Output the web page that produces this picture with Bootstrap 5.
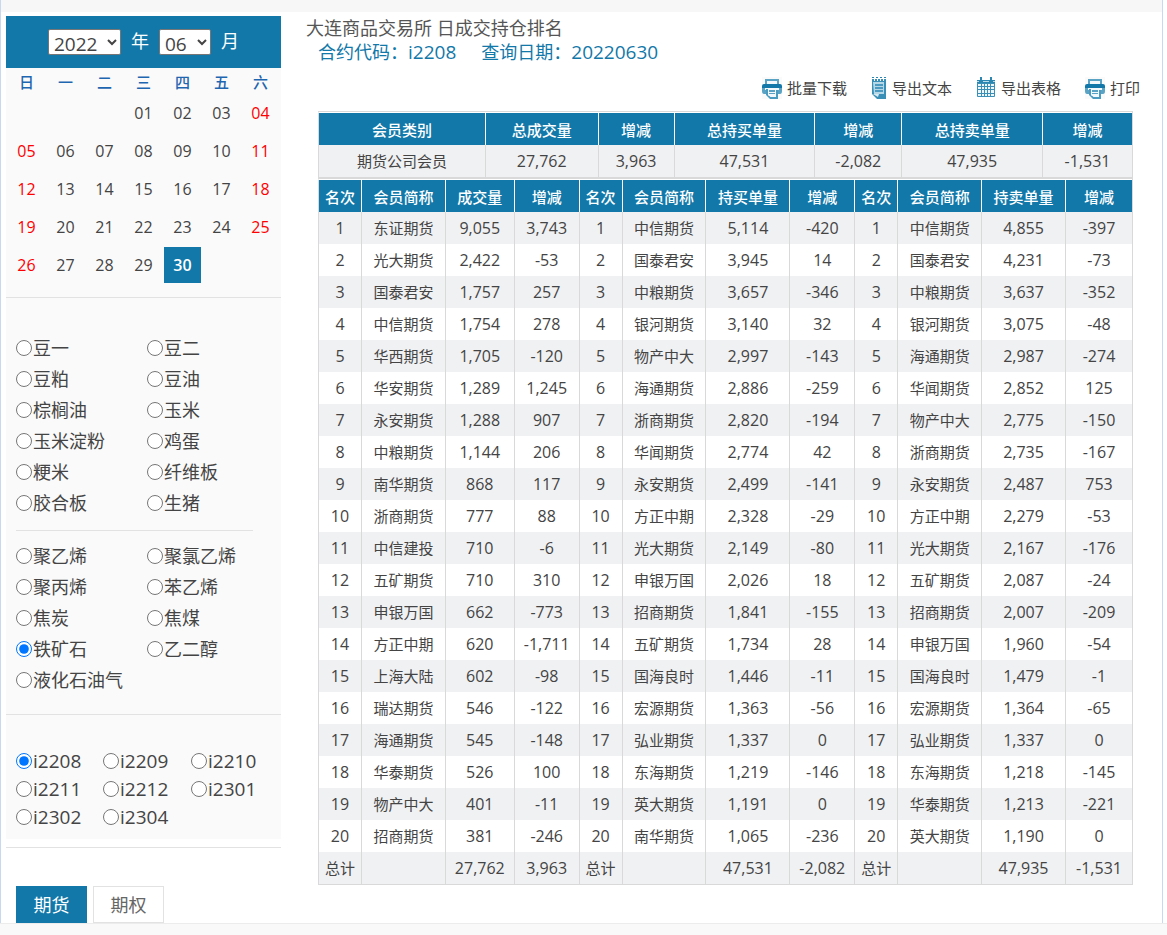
<!DOCTYPE html>
<html lang="zh-CN">
<head>
<meta charset="utf-8">
<meta name="viewport" content="width=device-width, initial-scale=1">
<title>日成交持仓排名</title>
<link href="https://cdn.jsdelivr.net/npm/bootstrap@5.3.0/dist/css/bootstrap.min.css" rel="stylesheet">
<style>
  :root { --brand: #1278a9; --rule: #e2e2e2; --grid: #d9d9d9; --ink: #444; }
  body { background: #fff; color: var(--ink); font-family: "Open Sans", "Noto Sans CJK SC", sans-serif; font-size: 18px; line-height: 24px; }
  a { color: inherit; text-decoration: none; }
  .page-frame { margin-right: 4px; border: solid #c8d8f0; border-width: 0 1px; }
  .top-strip { height: 12px; background: #f7f7f7; }
  .content { padding: 4px 22px 0 5px; }
  .foot { border-top: 1px solid #ececec; background: #f9f9f9; height: 12px; }
  .side { width: 275px; flex: none; }
  .panel { display: flow-root; background: #fafafa; border-bottom: 1px solid var(--rule); }
  .cal-head { background: var(--brand); color: #fff; height: 52px; gap: 10px; }
  .cal-head select { height: 26px; border: 1px solid #767676; border-radius: 2px; background-color: #fff; color: var(--ink); font-size: 19px; line-height: 20px; padding: 0 0 2px 1px; }
  .cal-head label { padding-bottom: 2px; }
  .sel-year { width: 73px; }
  .sel-month { width: 52px; }
  .calendar { width: 273px; table-layout: fixed; border-collapse: separate; border-spacing: 0; text-align: center; font-size: 16px; margin-bottom: 12px; }
  .calendar th { height: 27px; padding: 0 0 0 2px; color: #1f66b0; font-size: 15px; font-weight: 500; }
  .calendar td { height: 38px; padding: 0 0 2px 2px; }
  .calendar a { display: block; line-height: 36px; }
  .calendar td:first-child, .calendar td:last-child { color: #f00; }
  .calendar .chosen { background: var(--brand); color: #fff; font-weight: 600; }
  .choices { display: grid; padding: 0 10px; }
  .two-up { grid-template-columns: 131px 1fr; grid-auto-rows: 31px; }
  .three-up { grid-template-columns: 87px 88px 1fr; grid-auto-rows: 28px; font-size: 19px; }
  .choices label { display: flex; align-items: center; white-space: nowrap; }
  .choices input { width: 16px; height: 16px; margin: 0 1px 0 0; }
  .goods { padding: 34px 0 19px; }
  .thin-rule { margin: 12px 28px 9px 10px; border-top: 1px solid var(--rule); }
  .switch { gap: 6px; padding: 38px 0 0 10px; }
  .switch button { width: 71px; height: 37px; border: 1px solid var(--rule); background: #fff; color: #666; padding: 0; }
  .switch .on { background: var(--brand); border-color: var(--brand); color: #fff; }
  .report { padding-left: 25px; min-width: 0; }
  .title-line { color: #555; font-size: 18px; font-weight: 400; line-height: 24px; margin: 0; }
  .query { color: var(--brand); padding-left: 12px; gap: 25px; }
  .num { font-size: 19px; }
  .tools { gap: 24px; font-size: 15px; line-height: 24px; margin: 12px 0 11px; }
  .tools svg { width: 20px; height: 22px; margin-right: 5px; flex: none; }
  .tools .slim { width: 16px; }
  .sheet { margin: 0 7px 0 12px; }
  .ranks { width: 100%; table-layout: fixed; border-collapse: separate; border-spacing: 0; border: 1px solid var(--grid); border-left: 0; text-align: center; font-size: 15px; line-height: 24px; }
  .ranks th { height: 33px; padding: 1px 0 0; background: var(--brand); color: #fff; border: solid #fff; border-width: 1px 0 0 1px; font-weight: 500; }
  .ranks th:first-child { border-left-color: var(--grid); }
  .ranks td { height: 32px; padding: 0; border-left: 1px solid var(--grid); white-space: nowrap; }
  .ranks .fig { font-size: 16px; }
  .ranks tbody tr:nth-child(odd) td { background: #f0f1f3; }
</style>
</head>
<body>
<svg class="d-none" aria-hidden="true">
  <symbol id="ico-print" viewBox="0 0 20 22">
    <path fill="#fafafa" d="M0 0h20v22H0z"/>
    <path fill="#5ba3c4" d="M3 2h14v5H3z"/>
    <path fill="#f2f8fb" d="M5 4h10v3H5z"/>
    <path fill="#1278a9" d="M2 7h16q2 0 2 2v2H0V9q0-2 2-2z"/>
    <path fill="#5ba3c4" d="M0 11h20v3q0 3-2 3H2q-2 0-2-3z"/>
    <path fill="#f2f8fb" d="M3 11h14v2H3z"/>
    <path fill="#4b9abf" d="M4 12h2v6l3 2h5v-7h2v9H8l-4-4z"/>
    <path fill="#f2f8fb" d="M6 12h8v8H9l-3-2z"/>
    <path fill="#5ba3c4" d="M7 13h6v2H7zM7 16h6v1H7z"/>
  </symbol>
  <symbol id="ico-text" viewBox="0 0 16 22">
    <path fill="#3a8fb7" d="M1 2h14v20H6l-5-5z"/>
    <path fill="#b6d7e6" d="M2 5h11v12H3z"/>
    <path fill="#d8eaf2" d="M2 17h6l-1 3z"/>
    <path stroke="#2a87b2" stroke-width="1.500" d="M4 8h8M4 11h8M4 14h8"/>
    <path stroke="#fff" d="M3.500 2v2M6.500 2v2M9.500 2v2M12.500 2v2"/>
    <path stroke="#2a87b2" d="M1 .5h2M5 .5h2M9 .5h2M13 .5h2"/>
  </symbol>
  <symbol id="ico-grid" viewBox="0 0 20 22">
    <path fill="#2a87b2" d="M1 3h18v4H1zM4 0h2v4H4zM14 0h2v4h-2z"/>
    <path fill="#bcdbe8" d="M1 4h2v1H1zm6 0h6v1H7zm10 0h2v1h-2z"/>
    <path fill="#eef6fa" stroke="#3a8fb7" d="M1.500 6.500h17v13h-17z"/>
    <path stroke="#3a8fb7" d="M2 9.500h16M2 12.500h16M2 16.500h16M5.500 7v12M8.500 7v12M11.500 7v12M14.500 7v12"/>
  </symbol>
</svg>

<div class="page-frame">
  <div class="top-strip"></div>
  <main class="content d-flex">
    <aside class="side">
      <section class="panel">
        <div class="cal-head d-flex align-items-center justify-content-center">
          <select id="year" class="sel-year" aria-label="年份"><option>2022</option></select>
          <label for="year">年</label>
          <select id="month" class="sel-month" aria-label="月份"><option>06</option></select>
          <label for="month">月</label>
        </div>
        <table class="calendar">
          <thead><tr><th>日</th><th>一</th><th>二</th><th>三</th><th>四</th><th>五</th><th>六</th></tr></thead>
          <tbody id="days"></tbody>
        </table>
      </section>
      <section class="panel goods">
        <div class="choices two-up" data-name="variety" data-on="铁矿石" data-items="豆一 豆二 豆粕 豆油 棕榈油 玉米 玉米淀粉 鸡蛋 粳米 纤维板 胶合板 生猪"></div>
        <div class="thin-rule"></div>
        <div class="choices two-up" data-name="variety" data-on="铁矿石" data-items="聚乙烯 聚氯乙烯 聚丙烯 苯乙烯 焦炭 焦煤 铁矿石 乙二醇 液化石油气"></div>
      </section>
      <section class="panel pt-4">
        <div class="choices three-up mt-2 pb-2" data-name="contract" data-on="i2208" data-items="i2208 i2209 i2210 i2211 i2212 i2301 i2302 i2304"></div>
        <div class="bg-white pt-2"></div>
      </section>
      <div class="switch d-flex">
        <button type="button" class="on">期货</button>
        <button type="button">期权</button>
      </div>
    </aside>

    <section class="report flex-grow-1">
      <h1 class="title-line">大连商品交易所 日成交持仓排名</h1>
      <div class="query d-flex">
        <span>合约代码：<span class="num">i2208</span></span>
        <span>查询日期：<span class="num">20220630</span></span>
      </div>
      <nav class="tools d-flex justify-content-end">
        <a href="#" class="d-flex align-items-center"><svg><use href="#ico-print"/></svg>批量下载</a>
        <a href="#" class="d-flex align-items-center"><svg class="slim"><use href="#ico-text"/></svg>导出文本</a>
        <a href="#" class="d-flex align-items-center"><svg><use href="#ico-grid"/></svg>导出表格</a>
        <a href="#" class="d-flex align-items-center"><svg><use href="#ico-print"/></svg>打印</a>
      </nav>
      <div class="sheet">
        <table class="ranks">
          <colgroup id="sumCols"></colgroup>
          <thead><tr><th>会员类别</th><th>总成交量</th><th>增减</th><th>总持买单量</th><th>增减</th><th>总持卖单量</th><th>增减</th></tr></thead>
          <tbody><tr><td>期货公司会员</td><td class="fig">27,762</td><td class="fig">3,963</td><td class="fig">47,531</td><td class="fig">-2,082</td><td class="fig">47,935</td><td class="fig">-1,531</td></tr></tbody>
        </table>
        <table class="ranks">
          <colgroup id="rankCols"></colgroup>
          <thead><tr><th>名次</th><th>会员简称</th><th>成交量</th><th>增减</th><th>名次</th><th>会员简称</th><th>持买单量</th><th>增减</th><th>名次</th><th>会员简称</th><th>持卖单量</th><th>增减</th></tr></thead>
          <tbody id="rankRows"></tbody>
        </table>
      </div>
    </section>
  </main>
</div>
<footer class="foot"></footer>

<script src="https://cdn.jsdelivr.net/npm/bootstrap@5.3.0/dist/js/bootstrap.bundle.min.js"></script>
<script>
  // name, volume, change | name, long, change | name, short, change
  const ranks = `东证期货 9,055 3,743 中信期货 5,114 -420 中信期货 4,855 -397
光大期货 2,422 -53 国泰君安 3,945 14 国泰君安 4,231 -73
国泰君安 1,757 257 中粮期货 3,657 -346 中粮期货 3,637 -352
中信期货 1,754 278 银河期货 3,140 32 银河期货 3,075 -48
华西期货 1,705 -120 物产中大 2,997 -143 海通期货 2,987 -274
华安期货 1,289 1,245 海通期货 2,886 -259 华闻期货 2,852 125
永安期货 1,288 907 浙商期货 2,820 -194 物产中大 2,775 -150
中粮期货 1,144 206 华闻期货 2,774 42 浙商期货 2,735 -167
南华期货 868 117 永安期货 2,499 -141 永安期货 2,487 753
浙商期货 777 88 方正中期 2,328 -29 方正中期 2,279 -53
中信建投 710 -6 光大期货 2,149 -80 光大期货 2,167 -176
五矿期货 710 310 申银万国 2,026 18 五矿期货 2,087 -24
申银万国 662 -773 招商期货 1,841 -155 招商期货 2,007 -209
方正中期 620 -1,711 五矿期货 1,734 28 申银万国 1,960 -54
上海大陆 602 -98 国海良时 1,446 -11 国海良时 1,479 -1
瑞达期货 546 -122 宏源期货 1,363 -56 宏源期货 1,364 -65
海通期货 545 -148 弘业期货 1,337 0 弘业期货 1,337 0
华泰期货 526 100 东海期货 1,219 -146 东海期货 1,218 -145
物产中大 401 -11 英大期货 1,191 0 华泰期货 1,213 -221
招商期货 381 -246 南华期货 1,065 -236 英大期货 1,190 0`.split('\n').map(r => r.split(' '));

  const cell = v => `<td${/\d/.test(v) ? ' class="fig"' : ''}>${v}</td>`;
  const rows = ranks.map((r, i) => [0, 3, 6].flatMap(k => [String(i + 1), r[k], r[k + 1], r[k + 2]]));
  rows.push(['总计', '', '27,762', '3,963', '总计', '', '47,531', '-2,082', '总计', '', '47,935', '-1,531']);
  document.getElementById('rankRows').innerHTML = rows.map(r => `<tr>${r.map(cell).join('')}</tr>`).join('');

  // column shares of the full table width
  const cols = (id, shares) => {
    const total = shares.reduce((a, b) => a + b);
    document.getElementById(id).innerHTML = shares.map(s => `<col style="width:${s / total * 100}%">`).join('');
  };
  cols('sumCols', [167, 113, 76, 141, 87, 141, 90]);
  cols('rankCols', [43, 84, 69, 65, 43, 84, 84, 65, 43, 84, 84, 67]);

  // June 2022 as laid out by the exchange: the 1st falls on a Wednesday
  let html = '';
  for (let week = 0; week < 5; week++) {
    html += '<tr>';
    for (let d = 0; d < 7; d++) {
      const day = week * 7 + d - 2;
      html += day < 1 || day > 30 ? '<td></td>' : `<td><a href="#"${day === 30 ? ' class="chosen"' : ''}>${String(day).padStart(2, '0')}</a></td>`;
    }
    html += '</tr>';
  }
  document.getElementById('days').innerHTML = html;

  document.querySelectorAll('.choices').forEach(box => {
    const { name, on, items } = box.dataset;
    box.innerHTML = items.split(' ').map(t => `<label><input type="radio" name="${name}"${t === on ? ' checked' : ''}>${t}</label>`).join('');
  });
</script>
</body>
</html>
